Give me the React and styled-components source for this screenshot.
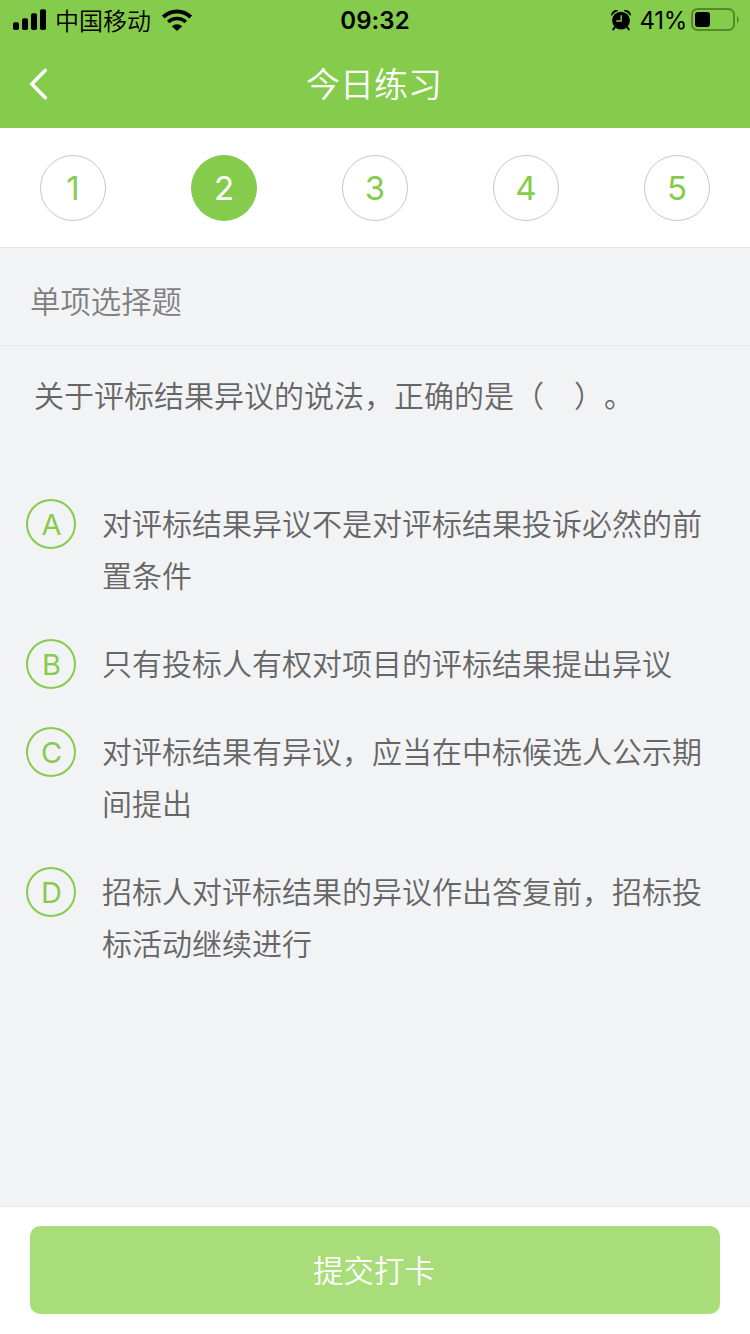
import React, { useState } from 'react'
import styled, { createGlobalStyle } from 'styled-components'

const steps = [1, 2, 3, 4, 5]

const options = [
    { key: 'A', text: '对评标结果异议不是对评标结果投诉必然的前置条件' },
    { key: 'B', text: '只有投标人有权对项目的评标结果提出异议' },
    { key: 'C', text: '对评标结果有异议，应当在中标候选人公示期间提出' },
    { key: 'D', text: '招标人对评标结果的异议作出答复前，招标投标活动继续进行' },
]

function SignalIcon() {
    return (
        <svg width="34" height="22" viewBox="0 0 34 22">
            <rect x="0" y="13.2" width="6" height="7.8" rx="1.8" />
            <rect x="9" y="9.2" width="6" height="11.8" rx="1.8" />
            <rect x="18" y="4.2" width="6" height="16.8" rx="1.8" />
            <rect x="27" y="0.2" width="6" height="20.8" rx="1.8" />
        </svg>
    )
}

function WifiIcon() {
    return (
        <svg width="30" height="22" viewBox="0 0 30 22" fill="none" stroke="#000">
            <path d="M1.3 8.1a19.4 19.4 0 0 1 27.4 0" strokeWidth="4" />
            <path d="M6.2 13.1a12.4 12.4 0 0 1 17.6 0" strokeWidth="3.6" />
            <path d="M9.8 17.3a7.4 7.4 0 0 1 10.4 0L15 22z" fill="#000" stroke="none" />
        </svg>
    )
}

function AlarmIcon() {
    return (
        <svg width="20" height="21" viewBox="0 0 20 21">
            <circle cx="10" cy="10.6" r="8.9" />
            <path d="M.6 5A5 5 0 0 1 6.4.6C5 1 1.6 3.4.6 5zM19.4 5A5 5 0 0 0 13.6.6C15 1 18.4 3.4 19.4 5z" stroke="#000" strokeWidth="1.2" strokeLinejoin="round" />
            <path d="M4 17l-1.8 2.4M16 17l1.8 2.4" stroke="#000" strokeWidth="2" strokeLinecap="round" />
            <path d="M10.2 5.2v5.8H5.2" fill="none" stroke="#86cc4c" strokeWidth="1.4" />
        </svg>
    )
}

function BatteryIcon() {
    return (
        <svg width="48" height="24" viewBox="0 0 48 24">
            <rect x="1" y="1" width="42" height="21" rx="5.5" fill="none" stroke="#568a29" strokeWidth="2" />
            <rect x="4" y="4" width="15" height="15" rx="3" />
            <path d="M46 8v7.4c2.4-1.2 2.4-6.2 0-7.4z" fill="#568a29" />
        </svg>
    )
}

function App() {
    const [current, setCurrent] = useState(2)

    return (
        <PageStyled>
            <GlobalStyle />
            <StatusBar>
                <Carrier>
                    <SignalIcon />
                    <span>中国移动</span>
                    <WifiIcon />
                </Carrier>
                <Clock>09:32</Clock>
                <Power>
                    <AlarmIcon />
                    <span>41%</span>
                    <BatteryIcon />
                </Power>
            </StatusBar>

            <Header>
                <BackButton aria-label="返回">
                    <svg width="20" height="32" viewBox="0 0 20 32">
                        <path d="M16.3 2.3L2.8 16l13.5 13.7" fill="none" stroke="#fff" strokeWidth="3.4" strokeLinecap="round" />
                    </svg>
                </BackButton>
                <h1>今日练习</h1>
            </Header>

            <Steps>
                {steps.map(step => (
                    <Step key={step} $active={step === current} onClick={() => setCurrent(step)}>
                        {step}
                    </Step>
                ))}
            </Steps>

            <SectionTitle>单项选择题</SectionTitle>

            <Content>
                <Question>关于评标结果异议的说法，正确的是（　）。</Question>
                <OptionList>
                    {options.map(({ key, text }) => (
                        <Option key={key}>
                            <Letter>{key}</Letter>
                            <p>{text}</p>
                        </Option>
                    ))}
                </OptionList>
            </Content>

            <Footer>
                <SubmitButton>提交打卡</SubmitButton>
            </Footer>
        </PageStyled>
    )
}

const GlobalStyle = createGlobalStyle`
    * {
        box-sizing: border-box;
        margin: 0;
        padding: 0;
    }

    body {
        background: #f2f3f5;
        font-family: Inter, 'Noto Sans CJK SC', sans-serif;
        text-spacing-trim: space-all;
    }

    button {
        border: none;
        background: none;
        font-family: inherit;
    }

    svg {
        display: block;
        flex-shrink: 0;
    }
`

const PageStyled = styled.div`
    display: flex;
    flex-direction: column;
    width: 750px;
    height: 1334px;
    background: #f2f3f5;
`

const StatusBar = styled.div`
    display: grid;
    grid-template-columns: 1fr auto 1fr;
    align-items: center;
    height: 40px;
    padding: 0 11px 0 13px;
    background: #86cc4c;
    color: #000;
    font-size: 24px;
`

const Carrier = styled.div`
    display: flex;
    align-items: center;
    font-weight: 350;
    line-height: 40px;
    span {
        margin: 0 11px 0 8px;
        padding-top: 3px;
        line-height: 37px;
    }
`

const Clock = styled.div`
    padding: 1px 2px 0 0;
    font-size: 24px;
    font-weight: 600;
    letter-spacing: 0.1px;
`

const Power = styled.div`
    display: flex;
    align-items: center;
    justify-content: flex-end;
    line-height: 40px;
    span {
        margin: 0 4px 0 9px;
        padding-top: 2px;
        font-size: 24px;
        letter-spacing: -0.3px;
        line-height: 38px;
    }
`

const Header = styled.header`
    display: grid;
    grid-template-columns: 60px 1fr 60px;
    align-items: center;
    height: 88px;
    background: #86cc4c;
    color: #fff;
    h1 {
        padding: 2px 2px 0 0;
        font-size: 34px;
        font-weight: 350;
        line-height: 86px;
        text-align: center;
    }
`

const BackButton = styled.button`
    padding-left: 29px;
`

const Steps = styled.nav`
    display: flex;
    justify-content: space-between;
    height: 120px;
    padding: 27px 40px 0;
    background: #fff;
    border-bottom: 1px solid #e6e6e6;
`

const Step = styled.button`
    width: 66px;
    height: 66px;
    border: 1px solid ${props => (props.$active ? '#86cc4c' : '#c8c8c8')};
    border-radius: 50%;
    background: ${props => (props.$active ? '#86cc4c' : '#fff')};
    color: ${props => (props.$active ? '#fff' : '#86cc4c')};
    font-size: 33px;
    font-weight: 400;
    line-height: 65px;
`

const SectionTitle = styled.h2`
    height: 98px;
    padding-left: 30px;
    border-bottom: 1px solid #e8e9eb;
    color: #808080;
    font-size: 30.4px;
    font-weight: 350;
    line-height: 109px;
`

const Content = styled.main`
    flex: 1;
    padding: 24px 30px 0 26px;
    color: #666;
    font-size: 30px;
    font-weight: 350;
    line-height: 52px;
`

const Question = styled.p`
    padding-left: 8px;
`

const OptionList = styled.ul`
    display: flex;
    flex-direction: column;
    gap: 36px;
    margin-top: 76px;
    list-style: none;
`

const Option = styled.li`
    display: flex;
    gap: 26px;
    p {
        flex: 1;
    }
`

const Letter = styled.span`
    flex-shrink: 0;
    width: 50px;
    height: 50px;
    margin-top: 1px;
    padding-left: 1px;
    border: 2px solid #86cc4c;
    border-radius: 50%;
    color: #86cc4c;
    font-size: 29px;
    font-weight: 400;
    line-height: 48px;
    text-align: center;
`

const Footer = styled.footer`
    height: 128px;
    padding: 19px 30px 0;
    background: #fff;
    border-top: 1px solid #e6e7e9;
`

const SubmitButton = styled.button`
    display: block;
    width: 100%;
    height: 88px;
    padding: 2px 2px 0 0;
    border-radius: 10px;
    background: #a9dd7a;
    color: #fff;
    font-size: 30.4px;
    font-weight: 350;
    line-height: 86px;
`

export default App
